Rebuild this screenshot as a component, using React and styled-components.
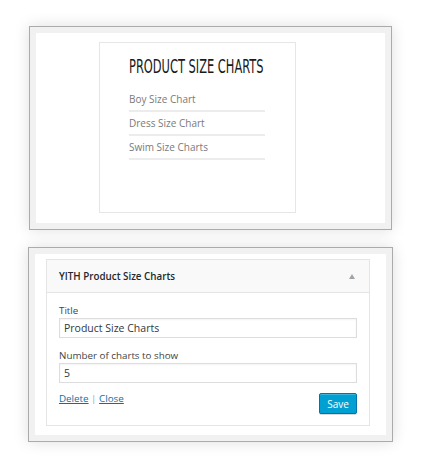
import React from 'react'
import styled, { createGlobalStyle } from 'styled-components'

const GlobalStyle = createGlobalStyle`
  html, body {
    margin: 0;
    padding: 0;
    background: #fff;
  }
  body {
    font-family: "Open Sans", "Liberation Sans", sans-serif;
  }
`

const Page = styled.div`
  width: 422px;
  height: 466px;
  display: flex;
  flex-direction: column;
  padding-top: 26px;
  box-sizing: border-box;
`

const Frame = styled.div`
  margin-left: ${p => p.left}px;
  margin-top: ${p => p.top || 0}px;
  width: ${p => p.width}px;
  height: ${p => p.height}px;
  box-sizing: border-box;
  border: 1px solid #ababab;
  background: #f1f1f1;
  padding: 6px;
  box-shadow: 0 0 14px rgba(0, 0, 0, 0.13);
`

const Canvas = styled.div`
  background: #fff;
  height: 100%;
  box-sizing: border-box;
  padding: ${p => p.pad};
`

const Widget = styled.div`
  width: 197px;
  height: 171px;
  box-sizing: border-box;
  border: 1px solid #e6e6e6;
  padding: 12px 30px 0 29px;
`

const WidgetTitle = styled.h2`
  margin: 0 0 11px;
  font-family: "Liberation Sans Narrow", "DejaVu Sans Condensed", sans-serif;
  font-weight: normal;
  font-size: 20px;
  line-height: 22px;
  color: #1a1a1a;
  white-space: nowrap;
  transform: scaleX(0.635);
  transform-origin: left center;
`

const ChartList = styled.ul`
  list-style: none;
  margin: 0;
  padding: 0;
`

const ChartItem = styled.li`
  height: 24px;
  box-sizing: border-box;
  border-bottom: 2px solid #ececec;
  font-size: 10px;
  line-height: 20px;
  color: #7a7a7a;
  padding-top: 1px;
`

const AdminWidget = styled.div`
  width: 324px;
  height: 167px;
  box-sizing: border-box;
  border: 1px solid #e5e5e5;
  background: #fff;
`

const AdminHeader = styled.div`
  height: 33px;
  box-sizing: border-box;
  background: #f9f9f9;
  border-bottom: 1px solid #e5e5e5;
  display: flex;
  align-items: center;
  justify-content: space-between;
  padding: 0 14px 0 12px;
  font-size: 9.8px;
  font-weight: 600;
  color: #23282d;
`

const Arrow = styled.span`
  width: 0;
  height: 0;
  border-left: 3.5px solid transparent;
  border-right: 3.5px solid transparent;
  border-bottom: 5px solid #a0a5aa;
`

const AdminBody = styled.div`
  padding: 11px 12px 0;
  display: flex;
  flex-direction: column;
`

const Label = styled.label`
  font-size: 9.8px;
  line-height: 14px;
  color: #444;
  margin-top: ${p => p.gap || 0}px;
`

const Input = styled.div`
  height: 20px;
  box-sizing: border-box;
  border: 1px solid #ddd;
  box-shadow: inset 0 1px 2px rgba(0, 0, 0, 0.05);
  padding: 0 4px;
  font-size: 10.5px;
  line-height: 18px;
  color: #32373c;
`

const Actions = styled.div`
  display: flex;
  justify-content: space-between;
  align-items: flex-start;
  margin-top: 8px;
`

const Links = styled.div`
  font-size: 9.8px;
  color: #a0a5aa;
  line-height: 16px;
`

const Link = styled.a`
  color: #0073aa;
  text-decoration: underline;
`

const SaveButton = styled.button`
  margin-top: 2px;
  width: 38px;
  height: 21px;
  box-sizing: border-box;
  border: 1px solid #0073aa;
  border-radius: 2px;
  background: #00a0d2;
  color: #fff;
  font-family: "Open Sans", sans-serif;
  font-size: 10px;
  padding: 0;
  box-shadow: inset 0 1px 0 rgba(120, 200, 230, 0.5), 0 1px 0 rgba(0, 0, 0, 0.15);
`

const charts = ['Boy Size Chart', 'Dress Size Chart', 'Swim Size Charts']

const App = () => (
  <Page>
    <GlobalStyle />
    <Frame left={29} width={363} height={204}>
      <Canvas pad="9px 0 0 63px">
        <Widget>
          <WidgetTitle>PRODUCT SIZE CHARTS</WidgetTitle>
          <ChartList>
            {charts.map(c => <ChartItem key={c}>{c}</ChartItem>)}
          </ChartList>
        </Widget>
      </Canvas>
    </Frame>
    <Frame left={28} top={17} width={365} height={195}>
      <Canvas pad="5px 0 0 11px">
        <AdminWidget>
          <AdminHeader>
            <span>YITH Product Size Charts</span>
            <Arrow />
          </AdminHeader>
          <AdminBody>
            <Label>Title</Label>
            <Input>Product Size Charts</Input>
            <Label gap={11}>Number of charts to show</Label>
            <Input>5</Input>
            <Actions>
              <Links>
                <Link>Delete</Link> | <Link>Close</Link>
              </Links>
              <SaveButton>Save</SaveButton>
            </Actions>
          </AdminBody>
        </AdminWidget>
      </Canvas>
    </Frame>
  </Page>
)

export default App
